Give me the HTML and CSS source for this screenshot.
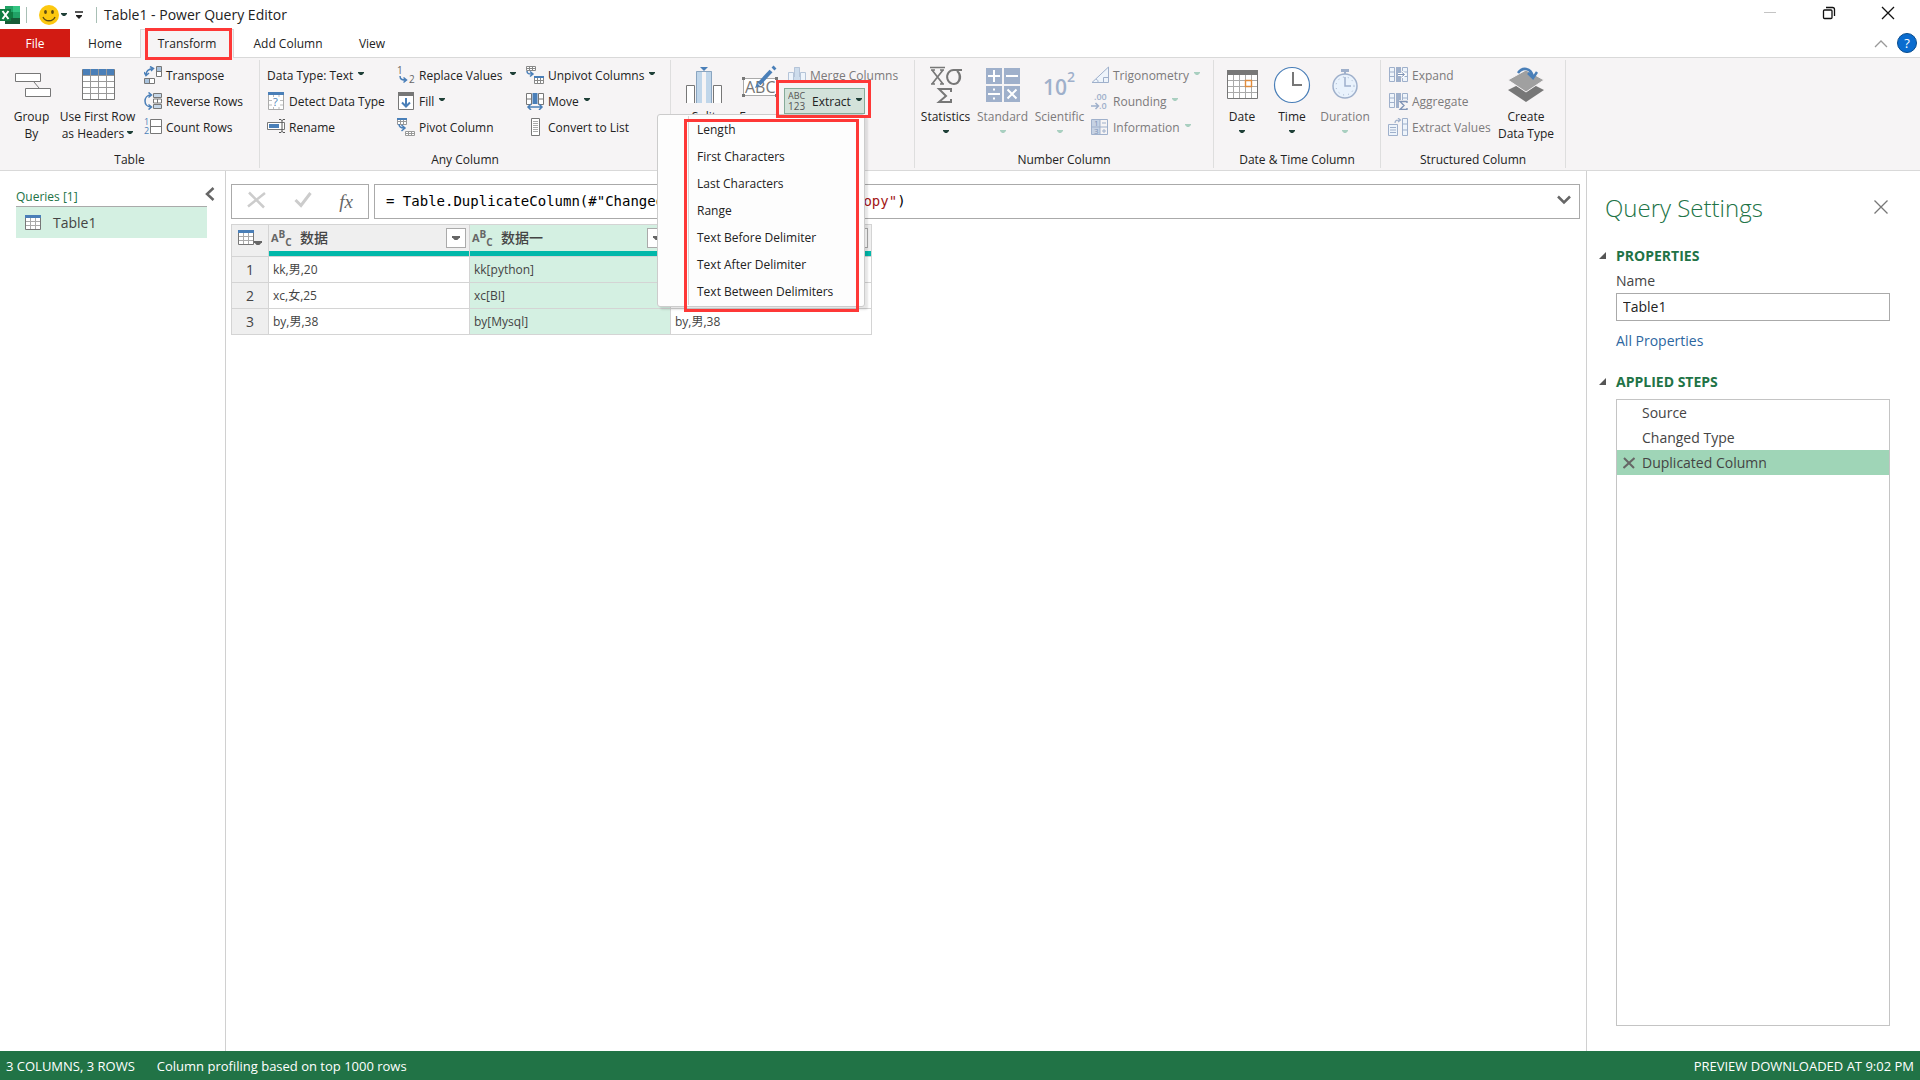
FILE: index.html
```html
<!DOCTYPE html>
<html lang="en">
  <head>
    <meta charset="UTF-8" />
    <meta name="viewport" content="width=device-width, initial-scale=1.0" />
    <title>Table1 - Power Query Editor</title>
    <link rel="stylesheet" href="styles.css">
  </head>
  <body>
    <!-- shared icons -->
    <svg class="defs" width="0" height="0">
      <symbol id="caret" viewBox="0 0 6 3"><path d="M0 0h6v1L4 3H2L0 1z" fill="currentColor"/></symbol>
      <symbol id="grid" viewBox="0 0 16 16">
        <path d="M.5.5h15v14H.5z" fill="#fff" stroke="#777"/>
        <path d="M1 6.500h14M1 10.500h14M5.500 3v11M10.500 3v11" stroke="#aaa" fill="none"/>
        <path d="M0 0h16v3H0z" fill="#4a7fb8"/>
      </symbol>
      <symbol id="cols" viewBox="0 0 20 18">
        <path d="M1.500 1.500h5v14h-5zM1.500 6h5M1.500 10.500h5M14.500 1.500h5v14h-5zM14.500 6h5M14.500 10.500h5" fill="#eef4fb" stroke="#9fb0cb"/>
        <path d="M8 1h5v15H8z" fill="#9fb0cb"/>
      </symbol>
    </svg>

    <header class="titlebar">
      <svg class="app-icon" width="20" height="20" viewBox="0 0 20 20">
        <path d="M5 1h8v6H5z" fill="#21a366"/><path d="M13 1h7v6h-7z" fill="#33c481"/>
        <path d="M5 7h8v6H5z" fill="#107c41"/><path d="M13 7h7v6h-7z" fill="#21a366"/>
        <path d="M5 13h15v6H5z" fill="#185c37"/>
        <path d="M0 4h11v12H0z" fill="#107c41"/>
        <path d="M2.500 6l6 8M8.500 6l-6 8" stroke="#fff" stroke-width="2"/>
      </svg>
      <span class="sep"></span>
      <button class="smile" aria-label="Send feedback">
        <svg width="20" height="20" viewBox="0 0 20 20"><circle cx="10" cy="10" r="10" fill="#fcc80f"/><ellipse cx="6.500" cy="7" rx="1.400" ry="2" fill="#5c4a12"/><ellipse cx="13.500" cy="7" rx="1.400" ry="2" fill="#5c4a12"/><path d="M4 12c2 5 10 5 12 0" fill="none" stroke="#5c4a12" stroke-width="1.300"/></svg>
        <svg class="caret" width="6" height="3"><use href="#caret"/></svg>
      </button>
      <button class="qat" aria-label="Customize toolbar">
        <svg width="8" height="8" viewBox="0 0 8 8"><path d="M1 4h6v1L4 8 1 5z" fill="#222"/><path d="M0 1h8" stroke="#222" stroke-width="1.500"/></svg>
      </button>
      <span class="sep"></span>
      <h1>Table1 - Power Query Editor</h1>
      <div class="window-buttons">
        <button aria-label="Minimize"><svg width="14" height="14" viewBox="0 0 14 14"><path d="M1 6.500h12" stroke="#c4c4c4"/></svg></button>
        <button aria-label="Restore"><svg width="14" height="14" viewBox="0 0 14 14" fill="none" stroke="#111" stroke-width="1.300"><rect x="1.500" y="4" width="8.500" height="8.500" rx="1"/><path d="M4 1.500h6.500a2 2 0 0 1 2 2V10"/></svg></button>
        <button aria-label="Close"><svg width="14" height="14" viewBox="0 0 14 14"><path d="M1 1l12 12M13 1L1 13" stroke="#111" stroke-width="1.300"/></svg></button>
      </div>
    </header>

    <nav class="tabs">
      <button class="tab file">File</button>
      <button class="tab home">Home</button>
      <button class="tab active">Transform<span class="highlight"></span></button>
      <button class="tab add">Add Column</button>
      <button class="tab view">View</button>
      <div class="tabs-right">
        <button aria-label="Collapse ribbon"><svg width="14" height="8" viewBox="0 0 14 8"><path d="M1 7l6-6 6 6" fill="none" stroke="#999" stroke-width="1.300"/></svg></button>
        <button class="help" aria-label="Help">?</button>
      </div>
    </nav>

    <section class="ribbon">
      <div class="group g-table">
        <div class="group-body">
          <button class="big w-group">
            <svg width="40" height="40" viewBox="0 0 40 40"><path d="M22 18l5 6" stroke="#777"/><g fill="#fff" stroke="#777"><path d="M3.500 9.500h25v8h-25z"/><path d="M13.500 24.500h25v8h-25z"/></g></svg>
            <span>Group<br>By</span>
          </button>
          <button class="big w-first">
            <svg width="40" height="40" viewBox="0 0 40 40"><path d="M4.500 5.500h32v30h-32z" fill="#fff" stroke="#777"/><path d="M5 5h31v6H5z" fill="#4a7fb8"/><path d="M5 11.500h31M5 17.500h31M5 23.500h31M5 29.500h31M12.500 5v30M20.500 5v30M28.500 5v30" stroke="#999" fill="none"/></svg>
            <span>Use First Row<br>as Headers <svg class="caret" width="6" height="3"><use href="#caret"/></svg></span>
          </button>
          <div class="stack">
            <button class="small"><svg width="18" height="18" viewBox="0 0 18 18"><g fill="#fff" stroke="#777"><path d="M12.500.5h5v10h-5zM.5 12.500h10v5H.5z"/></g><path d="M13 1h4v4h-4zM1 13h4v4H1z" fill="#a9c3de"/><path d="M12.500 5.500h5M5.500 12.500v5" stroke="#777"/><path d="M2 9C2 5 5 3 9 2.500M6 .5L9.500 2.500 7 5M0 6l2 3.500L5 7" fill="none" stroke="#4a7fb8" stroke-width="1.500"/></svg>Transpose</button>
            <button class="small"><svg width="18" height="18" viewBox="0 0 18 18"><g fill="#fff" stroke="#777"><path d="M9.500 1.500h8v4h-8zM9.500 7h8v4h-8zM9.500 12.500h8v4h-8zM13.500 7v4"/></g><path d="M10 2h7v3h-7zM10 13h7v3h-7z" fill="#c6d7e8"/><path d="M7 3C-1 3-1 15 7 15M4.500.5L7.500 3 4.500 5.500M4.500 12.500l3 2.500-3 2.500" fill="none" stroke="#4a7fb8" stroke-width="1.500"/></svg>Reverse Rows</button>
            <button class="small"><svg width="18" height="18" viewBox="0 0 18 18"><path d="M6.500 1.500h11v14h-11zM6.500 8.500h11" fill="#fff" stroke="#777"/><g font-family="Open Sans, sans-serif" font-size="9" fill="#4a7fb8"><text x="0" y="7">1</text><text x="0" y="16">2</text></g></svg>Count Rows</button>
          </div>
        </div>
        <div class="group-label">Table</div>
      </div>

      <div class="group g-any">
        <div class="group-body">
          <div class="stack w-type">
            <button class="small">Data Type: Text <svg class="caret" width="6" height="3"><use href="#caret"/></svg></button>
            <button class="small"><svg width="18" height="18" viewBox="0 0 18 18"><path d="M1.500.5h15v17h-15z" fill="#fff" stroke="#aaa"/><path d="M2 8.500h3M13 8.500h3M2 13h3M13 13h3M6.500 3v2M12 3v2M6.500 15v2M12 15v2" stroke="#bbb"/><path d="M1 0h16v3H1z" fill="#4a7fb8"/><text x="6" y="14" font-family="Open Sans, sans-serif" font-size="11" fill="#4a7fb8">?</text></svg>Detect Data Type</button>
            <button class="small"><svg width="18" height="18" viewBox="0 0 18 18"><path d="M.5 4.500h17v7H.5z" fill="#fff" stroke="#777"/><path d="M2 6h10v4H2z" fill="#4a7fb8"/><path d="M12 1.500h2l1 1 1-1h2M15 2v12M12 14.500h2l1-1 1 1h2" fill="none" stroke="#555"/></svg>Rename</button>
          </div>
          <div class="stack w-replace">
            <button class="small"><svg width="18" height="18" viewBox="0 0 18 18"><g font-family="Open Sans, sans-serif" font-size="10" fill="#666"><text x="0" y="8">1</text><text x="12" y="17">2</text></g><path d="M3 10c0 4 3 4 6 4M6.500 11.500L9.500 14l-3 2.500" fill="none" stroke="#4a7fb8" stroke-width="1.500"/></svg>Replace Values <svg class="caret gap" width="6" height="3"><use href="#caret"/></svg></button>
            <button class="small"><svg width="18" height="18" viewBox="0 0 18 18"><path d="M1.500.5h15v17h-15z" fill="#fff" stroke="#777"/><path d="M1 0h16v4H1z" fill="#777"/><path d="M9 6v8M5 10.500l4 4 4-4" fill="none" stroke="#4a7fb8" stroke-width="2"/></svg>Fill <svg class="caret" width="6" height="3"><use href="#caret"/></svg></button>
            <button class="small"><svg width="18" height="18" viewBox="0 0 18 18"><path d="M.5.500h9v6h-9zM.5 3.500h9M3.500 1v5M6.500 1v5M8.500 13.500h9v4h-9zM8.500 15.500h9M11.500 13v4M14.500 13v4" fill="#fff" stroke="#999"/><path d="M0 0h10v2H0z" fill="#4a7fb8"/><path d="M2 6c0 3 2 4 5 4M4.500 7L8 10l-3.500 3" fill="none" stroke="#4a7fb8" stroke-width="1.500"/></svg>Pivot Column</button>
          </div>
          <div class="stack">
            <button class="small"><svg width="18" height="18" viewBox="0 0 18 18"><path d="M.5.500h9v4h-9zM.5 2.500h9M3.500 1v4M6.500 1v4M8.500 10.500h9v7h-9zM8.500 14.500h9M11.500 12v5M14.500 12v5" fill="#fff" stroke="#888"/><path d="M8 10h10v2H8z" fill="#4a7fb8"/><path d="M1 5c0 3 2 3 5 3M4 5.500L7 8l-3 2.500" fill="none" stroke="#4a7fb8" stroke-width="1.500"/></svg>Unpivot Columns <svg class="caret" width="6" height="3"><use href="#caret"/></svg></button>
            <button class="small"><svg width="18" height="18" viewBox="0 0 18 18"><path d="M.5 1.500h5v11h-5zM.5 7h5M12.500 1.500h5v11h-5zM12.500 7h5" fill="#fff" stroke="#777"/><path d="M6.500 1h5v11h-5z" fill="#4a7fb8"/><path d="M2 15h14M5 12l-3 3 3 3M13 12l3 3-3 3" fill="none" stroke="#4a7fb8" stroke-width="1.500"/></svg>Move <svg class="caret" width="6" height="3"><use href="#caret"/></svg></button>
            <button class="small"><svg width="18" height="18" viewBox="0 0 18 18"><path d="M5.500.5h8v17h-8z" fill="#fff" stroke="#777"/><path d="M7 3.500h5M7 5.500h5M7 7.500h5M7 9.500h5M7 11.500h5M7 13.500h5" stroke="#aaa"/></svg>Convert to List</button>
          </div>
        </div>
        <div class="group-label">Any Column</div>
      </div>

      <div class="group g-text">
        <div class="group-body">
          <button class="big w-split">
            <svg width="40" height="40" viewBox="0 0 40 40"><path d="M2.500 39V21.500h8V39M29.500 39V21.500h8V39" fill="#fff" stroke="#777"/><path d="M12 7h6v32h-6zM22 7h6v32h-6z" fill="#c0d6ea"/><path d="M12.500 39V7.500h15V39" fill="none" stroke="#8aa5c0"/><path d="M18 8h4v31h-4z" fill="#f6f4f5"/><path d="M16 3h8l-4 4z" fill="#4a7fb8"/></svg>
            <span>Split<br>Column</span>
          </button>
          <button class="big w-format">
            <svg width="40" height="40" viewBox="0 0 40 40"><path d="M3.500 14.500h33v17h-33z" fill="#fff" stroke="#aaa"/><text x="5" y="29" font-family="Open Sans, sans-serif" font-size="16" fill="#777">ABC</text><path d="M2 13h3v3H2zM2 30h3v3H2zM35 30h3v3h-3zM35 13h3v3h-3z" fill="#777"/><path d="M19 20L31 7" stroke="#4a7fb8" stroke-width="4"/><path d="M33 5l2-2" stroke="#4a7fb8" stroke-width="4"/><path d="M15 24l2-5 3 3z" fill="#4a7fb8"/></svg>
            <span>Format</span>
          </button>
          <div class="stack">
            <button class="small" disabled><svg width="18" height="18" viewBox="0 0 18 18"><path d="M.5 17V6.500h5V17M12.500 17V6.500h5V17" fill="#eef4fb" stroke="#b5c4d8"/><path d="M6 1h6v16H6z" fill="#cddcec"/><path d="M6.500 11V1.500h5V11" fill="none" stroke="#b5c4d8"/></svg>Merge Columns</button>
            <div class="extract">
              <button class="small pressed" aria-expanded="true"><svg width="20" height="20" viewBox="0 0 20 20"><g font-family="Open Sans, sans-serif" font-size="9" fill="#555"><text x="0" y="8">ABC</text><text x="0" y="19" font-size="10">123</text></g></svg>Extract <svg class="caret" width="6" height="3"><use href="#caret"/></svg></button>
              <span class="highlight"></span>
              <div class="menu">
                <div class="menu-items">
                  <button>Length</button>
                  <button>First Characters</button>
                  <button>Last Characters</button>
                  <button>Range</button>
                  <button>Text Before Delimiter</button>
                  <button>Text After Delimiter</button>
                  <button>Text Between Delimiters</button>
                </div>
                <span class="highlight"></span>
              </div>
            </div>
          </div>
        </div>
      </div>

      <div class="group g-number">
        <div class="group-body">
          <button class="big w-num">
            <svg width="40" height="40" viewBox="0 0 40 40"><path d="M4 3.500h15M6 6l11 14M17 6L6 20M5 6h4M14 6h4M5 20h4M14 20h4" stroke="#777" stroke-width="1.700" fill="none"/><path d="M36 6h-8a6.500 7 0 1 0 3 1c4 3 3.500 13-3 13" stroke="#777" stroke-width="2" fill="none"/><path d="M25 28v-3H13l7 7-7 6h12v-3" stroke="#777" stroke-width="2" fill="none"/></svg>
            <span>Statistics</span><svg class="caret" width="6" height="3"><use href="#caret"/></svg>
          </button>
          <button class="big w-num" disabled>
            <svg width="40" height="40" viewBox="0 0 40 40"><path d="M3 4h16v16H3zM21 4h16v16H21zM3 22h16v16H3zM21 22h16v16H21z" fill="#9fb0cb"/><path d="M5 12h12M11 6v12M23 12h12M5 30h12M24.500 25.500l9 9M33.500 25.500l-9 9" stroke="#fff" stroke-width="2"/><path d="M10 24.500h2v2h-2zM10 33.500h2v2h-2z" fill="#fff"/></svg>
            <span>Standard</span><svg class="caret" width="6" height="3"><use href="#caret"/></svg>
          </button>
          <button class="big w-num" disabled>
            <svg width="40" height="40" viewBox="0 0 40 40"><g font-family="Open Sans, sans-serif" font-weight="600" fill="#9fb0cb"><text x="3" y="31" font-size="21">10</text><text x="27" y="18" font-size="14">2</text></g></svg>
            <span>Scientific</span><svg class="caret" width="6" height="3"><use href="#caret"/></svg>
          </button>
          <div class="stack">
            <button class="small" disabled><svg width="18" height="18" viewBox="0 0 18 18"><path d="M1 16.500L17.500 1v15.500zM12.500 16v-4.500h5M5 13c2 1 2 2 2 3" fill="#eef4fb" stroke="#9fb0cb"/></svg>Trigonometry <svg class="caret" width="6" height="3"><use href="#caret"/></svg></button>
            <button class="small" disabled><svg width="18" height="18" viewBox="0 0 18 18"><g font-family="Open Sans, sans-serif" font-weight="600" font-size="9" fill="#9fb0cb"><text x="3" y="8">.00</text><text x="8" y="17">.0</text></g><path d="M0 14h7M4.500 11L7.500 14l-3 3" fill="none" stroke="#9fb0cb" stroke-width="1.500"/></svg>Rounding <svg class="caret" width="6" height="3"><use href="#caret"/></svg></button>
            <button class="small" disabled><svg width="18" height="18" viewBox="0 0 18 18"><path d="M1 1h8v16H1z" fill="#c6d2e4"/><path d="M.5 1.500h16v15H.5zM9 1v16M.5 9h16M11 5h4M11 13h4M13 11v4" fill="none" stroke="#9fb0cb"/><g font-family="Open Sans, sans-serif" font-size="8" fill="#7f93b5"><text x="3" y="8">1</text><text x="3" y="16">3</text></g></svg>Information <svg class="caret" width="6" height="3"><use href="#caret"/></svg></button>
          </div>
        </div>
        <div class="group-label">Number Column</div>
      </div>

      <div class="group g-date">
        <div class="group-body">
          <button class="big w-date">
            <svg width="40" height="40" viewBox="0 0 40 40"><path d="M5.500 6.500h30v28h-30z" fill="#fff" stroke="#777"/><path d="M5 6h31v5H5z" fill="#777"/><path d="M6 16.500h29M6 22.500h29M6 28.500h29M11.500 11v23M17.500 11v23M23.500 11v23M29.500 11v23" stroke="#aaa"/><path d="M23.500 16.500h6v6h-6z" fill="#fff" stroke="#e08b3c" stroke-width="1.400"/></svg>
            <span>Date</span><svg class="caret" width="6" height="3"><use href="#caret"/></svg>
          </button>
          <button class="big w-date">
            <svg width="40" height="40" viewBox="0 0 40 40"><circle cx="20" cy="21" r="17.500" fill="#fff" stroke="#4a7fb8" stroke-width="1.200"/><path d="M21 8v13h9" fill="none" stroke="#777" stroke-width="2"/></svg>
            <span>Time</span><svg class="caret" width="6" height="3"><use href="#caret"/></svg>
          </button>
          <button class="big w-dur" disabled>
            <svg width="40" height="40" viewBox="0 0 40 40"><path d="M16 5h8v3h-3v2h-2V8h-3z" fill="#9fb0cb"/><circle cx="20" cy="22" r="12" fill="#e9f2fc" stroke="#9fb0cb" stroke-width="1.500"/><circle cx="20" cy="22" r="9" fill="none" stroke="#9fb0cb" stroke-dasharray="1 4"/><path d="M20 13v9h6" fill="none" stroke="#9fb0cb" stroke-width="1.500"/></svg>
            <span>Duration</span><svg class="caret" width="6" height="3"><use href="#caret"/></svg>
          </button>
        </div>
        <div class="group-label">Date &amp; Time Column</div>
      </div>

      <div class="group g-struct">
        <div class="group-body">
          <div class="stack w-expand">
            <button class="small" disabled><svg width="20" height="18"><use href="#cols"/><path d="M10 8.500h6M13.500 6l3 2.500-3 2.500" fill="none" stroke="#fff" stroke-width="3"/><path d="M10 8.500h6M13.500 6l3 2.500-3 2.500" fill="none" stroke="#7f93b5"/></svg>Expand</button>
            <button class="small" disabled><svg width="20" height="18"><use href="#cols"/><path d="M11 8h9v10h-9z" fill="#f6f4f5"/><path d="M19 11V9.500h-7l4 4-4 4h7V16" fill="none" stroke="#7f93b5" stroke-width="1.400"/></svg>Aggregate</button>
            <button class="small" disabled><svg width="20" height="18" viewBox="0 0 20 18"><path d="M.5 6.500h9v11h-9zM14.500.5h5v17h-5zM14.500 6h5M14.500 12h5" fill="#eef4fb" stroke="#9fb0cb"/><path d="M2 9.500h6M2 12h6M2 14.500h6M7 5c0-3 2-3 5-3M10 0l2.500 2L10 4" fill="none" stroke="#9fb0cb" stroke-width="1.200"/></svg>Extract Values</button>
          </div>
          <button class="big w-create">
            <svg width="40" height="40" viewBox="0 0 40 40"><path d="M2 26l18-9 18 9-18 12z" fill="#777"/><path d="M2 16L20 6l18 10-18 12z" fill="#a0a0a0" stroke="#f6f4f5"/><path d="M12 9c4-6 13-6 15 4M22 9l5 5 4-6" fill="none" stroke="#4a7fb8" stroke-width="2.500"/></svg>
            <span>Create<br>Data Type</span>
          </button>
        </div>
        <div class="group-label">Structured Column</div>
      </div>
    </section>

    <main class="workspace">
      <aside class="queries">
        <div class="queries-head">
          <h2>Queries [1]</h2>
          <button aria-label="Collapse queries"><svg width="10" height="14" viewBox="0 0 10 14"><path d="M8.500 1L2 7l6.500 6" fill="none" stroke="#666" stroke-width="2.500"/></svg></button>
        </div>
        <button class="query"><svg width="16" height="16"><use href="#grid"/></svg>Table1</button>
      </aside>

      <section class="editor">
        <div class="formula">
          <div class="formula-tools">
            <button aria-label="Cancel"><svg width="20" height="18" viewBox="0 0 20 18"><path d="M2 1.500l15 15M18 2L1 15.500" stroke="#ccc" stroke-width="2.500"/></svg></button>
            <button aria-label="Apply"><svg width="18" height="18" viewBox="0 0 18 18"><path d="M1.500 9l5.500 5.500L16.500 2" fill="none" stroke="#ccc" stroke-width="3"/></svg></button>
            <button class="fx" aria-label="Add step">fx</button>
          </div>
          <div class="formula-box">
            <code>= Table.DuplicateColumn(#"Changed Type", <em>"数据"</em>, <em>"数据 - Copy"</em>)</code>
            <button aria-label="Expand formula bar"><svg width="14" height="10" viewBox="0 0 14 10"><path d="M1 1.500l6 6 6-6" fill="none" stroke="#666" stroke-width="2.500"/></svg></button>
          </div>
        </div>
        <table class="grid">
          <thead>
            <tr>
              <th class="index"><div class="th corner"><svg width="16" height="16"><use href="#grid"/></svg><svg class="caret" width="8" height="4"><use href="#caret"/></svg></div></th>
              <th><div class="th"><span class="type">A<sup>B</sup><sub>C</sub></span><span>数据</span><button aria-label="Filter"><svg width="8" height="4"><use href="#caret"/></svg></button></div></th>
              <th class="selected"><div class="th"><span class="type">A<sup>B</sup><sub>C</sub></span><span>数据一</span><button aria-label="Filter"><svg width="8" height="4"><use href="#caret"/></svg></button></div></th>
              <th><div class="th"><span class="type">A<sup>B</sup><sub>C</sub></span><span>数据 - Copy</span><button aria-label="Filter"><svg width="8" height="4"><use href="#caret"/></svg></button></div></th>
            </tr>
          </thead>
          <tbody>
            <tr><td class="index">1</td><td>kk,男,20</td><td class="selected">kk[python]</td><td>kk,男,20</td></tr>
            <tr><td class="index">2</td><td>xc,女,25</td><td class="selected">xc[BI]</td><td>xc,女,25</td></tr>
            <tr><td class="index">3</td><td>by,男,38</td><td class="selected">by[Mysql]</td><td>by,男,38</td></tr>
          </tbody>
        </table>
      </section>

      <aside class="settings">
        <div class="settings-head">
          <h2>Query Settings</h2>
          <button aria-label="Close settings"><svg width="14" height="14" viewBox="0 0 14 14"><path d="M.5.5l13 13M13.500.5l-13 13" stroke="#777" stroke-width="1.300"/></svg></button>
        </div>
        <h3><svg width="7" height="7" viewBox="0 0 7 7"><path d="M7 0v7H0z" fill="#555"/></svg>PROPERTIES</h3>
        <div class="props">
          <label for="name">Name</label>
          <input type="text" id="name" value="Table1" />
          <a href="#">All Properties</a>
        </div>
        <h3><svg width="7" height="7" viewBox="0 0 7 7"><path d="M7 0v7H0z" fill="#555"/></svg>APPLIED STEPS</h3>
        <ul class="steps">
          <li>Source</li>
          <li>Changed Type</li>
          <li class="current"><button aria-label="Delete step"><svg width="12" height="12" viewBox="0 0 12 12"><path d="M1 1l10 10M11.500 1L.5 11" stroke="#666" stroke-width="2"/></svg></button>Duplicated Column</li>
        </ul>
      </aside>
    </main>

    <footer class="status">
      <span>3 COLUMNS, 3 ROWS</span>
      <span>Column profiling based on top 1000 rows</span>
      <span class="preview">PREVIEW DOWNLOADED AT 9:02 PM</span>
    </footer>
  </body>
</html>
```
FILE: styles.css
```css
* {
  margin: 0;
  padding: 0;
  box-sizing: border-box;
}
body {
  display: flex;
  flex-direction: column;
  min-height: 100vh;
  background-color: white;
  color: #222;
  font-family: "Open Sans", "Noto Sans CJK SC", sans-serif;
  font-size: 12px;
}
button {
  background: none;
  border: none;
  font: inherit;
  color: inherit;
  white-space: nowrap;
}
svg {
  flex: none;
}
.defs {
  position: absolute;
}
.caret {
  color: #1f4038;
}
.highlight {
  position: absolute;
  border: 3px solid #fe3837;
  pointer-events: none;
}

/* title bar */
.titlebar {
  display: flex;
  align-items: center;
  height: 29px;
}
.titlebar h1 {
  font-size: 14px;
  font-weight: 400;
  margin-left: 7px;
}
.sep {
  width: 1px;
  height: 16px;
  background-color: #a8bfb5;
  margin-left: 6px;
}
.smile {
  display: flex;
  align-items: center;
  gap: 2px;
  margin-left: 12px;
}
.qat {
  margin: 0 7px 0 8px;
}
.window-buttons {
  display: flex;
  gap: 45px;
  margin-left: auto;
  padding-right: 25px;
}

/* tabs */
.tabs {
  display: flex;
  height: 28px;
}
.tab {
  position: relative;
}
.file {
  width: 70px;
  background-color: #d21b13;
  color: white;
}
.home {
  width: 70px;
}
.active {
  z-index: 1;
  width: 94px;
  height: 29px;
  padding-bottom: 2px;
  background-color: #f6f4f5;
  border: 1px solid #d9d9d9;
  border-bottom: none;
}
.active .highlight {
  inset: -2px 1px -2px 4px;
}
.add {
  width: 108px;
}
.view {
  width: 60px;
}
.tabs-right {
  display: flex;
  align-items: center;
  gap: 9px;
  margin-left: auto;
  padding-right: 3px;
}
.help {
  width: 20px;
  height: 20px;
  border-radius: 50%;
  border: 1px solid #084c8d;
  background-color: #0a6ccf;
  color: white;
  font-size: 13px;
  line-height: 18px;
}

/* ribbon */
.ribbon {
  display: flex;
  height: 114px;
  background-color: #f6f4f5;
  border-top: 1px solid #d9d9d9;
  border-bottom: 1px solid #d9d9d9;
}
.group {
  display: flex;
  flex-direction: column;
  justify-content: space-between;
  margin: 2px 0;
  border-right: 1px solid #dedede;
}
.g-table {
  width: 260px;
}
.g-any {
  width: 411px;
}
.g-any .group-body {
  padding-left: 7px;
}
.g-text {
  width: 244px;
}
.g-text .group-body {
  padding-left: 6px;
}
.g-number {
  width: 299px;
}
.g-number .group-body {
  padding-left: 2px;
}
.g-date {
  width: 167px;
}
.g-date .group-body {
  padding-left: 3px;
}
.g-struct {
  width: 185px;
}
.g-struct .group-body {
  padding-left: 7px;
}
.group-body {
  display: flex;
}
.group-label {
  text-align: center;
  line-height: 16px;
}
.big {
  display: flex;
  flex-direction: column;
  align-items: center;
  padding-top: 4px;
  line-height: 17px;
}
.big > span {
  margin-top: 4px;
}
.big > .caret {
  margin-top: 5px;
}
.big span .caret {
  vertical-align: 4px;
}
.w-group {
  width: 63px;
}
.w-first {
  width: 69px;
  margin-right: 12px;
}
.w-type {
  width: 130px;
}
.w-replace {
  width: 129px;
}
.w-split {
  width: 54px;
}
.w-format {
  width: 57px;
}
.w-num {
  width: 57px;
}
.g-number .stack {
  margin-left: 3px;
}
.w-date {
  width: 50px;
}
.w-dur {
  width: 56px;
}
.w-expand {
  width: 105px;
}
.w-create {
  width: 66px;
}
.stack {
  padding-top: 2px;
}
.small {
  display: flex;
  align-items: center;
  gap: 4px;
  height: 26px;
}
.small .caret {
  margin: 0 0 3px 1px;
}
.small .gap {
  margin-left: 4px;
}
button:disabled {
  color: #7c7a7b;
}
button:disabled .caret {
  color: #a9cfc0;
}
.extract {
  position: relative;
  width: 81px;
  margin-left: -4px;
}
.pressed {
  width: 100%;
  padding-left: 3px;
  background-color: #d3e2da;
  border: 1px solid #86ab99;
}
.extract > .highlight {
  inset: -8px -6px -4px -8px;
  z-index: 3;
}
.menu {
  position: absolute;
  top: 100%;
  right: 0;
  z-index: 2;
  width: 208px;
  padding: 1px 0 1px 30px;
  background-color: #fdfdfd;
  border: 1px solid #ccc;
  border-radius: 3px;
  box-shadow: 3px 3px 2px rgba(0, 0, 0, 0.1);
}
.menu-items {
  border-left: 1px solid #d5d5d5;
}
.menu button {
  display: block;
  width: 100%;
  height: 27px;
  padding-left: 8px;
  text-align: left;
}
.menu .highlight {
  inset: 4px 5px -6px 26px;
}

/* workspace */
.workspace {
  display: flex;
  flex: 1;
}
.queries {
  width: 226px;
  padding: 16px 18px 0 16px;
  border-right: 1px solid #d0d0d0;
}
.queries-head {
  display: flex;
  justify-content: space-between;
  height: 19px;
  margin-right: -8px;
}
.queries-head h2 {
  font-size: 12px;
  font-weight: 400;
  line-height: 20px;
  color: #217346;
}
.queries-head button {
  height: 14px;
}
.query {
  display: flex;
  align-items: center;
  gap: 12px;
  width: 100%;
  height: 32px;
  padding-left: 9px;
  background-color: #d4f0e2;
  border-top: 1px solid #aaa;
  color: #444;
  font-size: 14px;
}
.editor {
  flex: 1;
  min-width: 0;
  padding: 13px 6px 0 5px;
}
.formula {
  display: flex;
  gap: 5px;
  height: 35px;
}
.formula-tools {
  display: flex;
  align-items: center;
  justify-content: space-between;
  width: 138px;
  padding: 0 15px;
  border: 1px solid #aaa;
}
.fx {
  font-family: "Liberation Serif", serif;
  font-size: 19px;
  font-style: italic;
  color: #666;
}
.formula-box {
  display: flex;
  align-items: center;
  justify-content: space-between;
  flex: 1;
  padding: 0 8px 2px 11px;
  border: 1px solid #aaa;
}
.formula-box code {
  font-family: "DejaVu Sans Mono", "Noto Sans CJK SC", monospace;
  font-size: 14px;
  line-height: 20px;
  color: black;
}
.formula-box em {
  font-style: normal;
  color: #a31515;
}
.grid {
  width: 641px;
  margin-top: 5px;
  border-collapse: collapse;
  table-layout: fixed;
  color: #444;
}
.grid th,
.grid td {
  border: 1px solid #d4d4d4;
}
.grid th {
  background-color: #efefef;
}
.grid td {
  height: 26px;
  padding-left: 4px;
  line-height: 18px;
}
.grid .index {
  width: 37px;
  padding: 0;
  text-align: center;
  background-color: #efefef;
  font-size: 14px;
}
.grid .selected {
  background-color: #d4f0e2;
}
.th {
  display: flex;
  align-items: center;
  gap: 8px;
  height: 31px;
  padding: 0 3px 0 2px;
  border-bottom: 5px solid #01b8aa;
  font-size: 14px;
  font-weight: 500;
  line-height: 20px;
}
.th .type {
  display: flex;
  width: 21px;
  font-size: 11px;
  font-weight: 700;
  color: #666;
}
.type sup {
  margin-top: -4px;
}
.type sub {
  margin: 4px 0 -4px;
}
.type sup,
.type sub {
  font-size: 10px;
}
.th button {
  display: flex;
  align-items: center;
  justify-content: center;
  width: 20px;
  height: 20px;
  margin-left: auto;
  background-color: white;
  border: 1px solid #aaa;
  color: #666;
}
.corner {
  gap: 0;
  padding-left: 6px;
  border-bottom-color: #efefef;
}
.corner .caret {
  align-self: flex-end;
  margin-bottom: 6px;
  color: #666;
}

/* query settings */
.settings {
  display: flex;
  flex-direction: column;
  width: 334px;
  padding: 18px 30px 25px 12px;
  border-left: 1px solid #d0d0d0;
  color: #444;
  font-size: 14px;
}
.settings-head {
  display: flex;
  align-items: center;
  justify-content: space-between;
  height: 38px;
  padding: 0 2px 0 6px;
}
.settings h2 {
  font-size: 24px;
  font-weight: 300;
  line-height: 34px;
  color: #217346;
}
.settings h3 {
  display: flex;
  align-items: center;
  gap: 10px;
  height: 20px;
  margin-top: 18px;
  font-size: 14px;
  color: #217346;
}
.props {
  display: flex;
  flex-direction: column;
  margin: 6px 0 2px 17px;
}
.props label {
  line-height: 20px;
}
.props input {
  height: 28px;
  margin: 2px 0 10px;
  padding: 0 8px 2px 6px;
  border: 1px solid #aaa;
  font: inherit;
  color: #222;
}
.props a {
  line-height: 20px;
  color: #2b66a0;
  text-decoration: none;
}
.steps {
  flex: 1;
  margin: 8px 0 0 17px;
  border: 1px solid #c4c4c4;
  list-style-type: none;
}
.steps li {
  display: flex;
  align-items: center;
  height: 25px;
  padding-left: 25px;
}
.steps .current {
  padding-left: 6px;
  gap: 7px;
  background-color: #9fd5b7;
}
.steps button {
  display: flex;
}

/* status bar */
.status {
  display: flex;
  align-items: center;
  gap: 22px;
  height: 29px;
  padding: 0 6px;
  background-color: #217346;
  color: white;
  font-size: 13px;
}
.preview {
  margin-left: auto;
}
```
